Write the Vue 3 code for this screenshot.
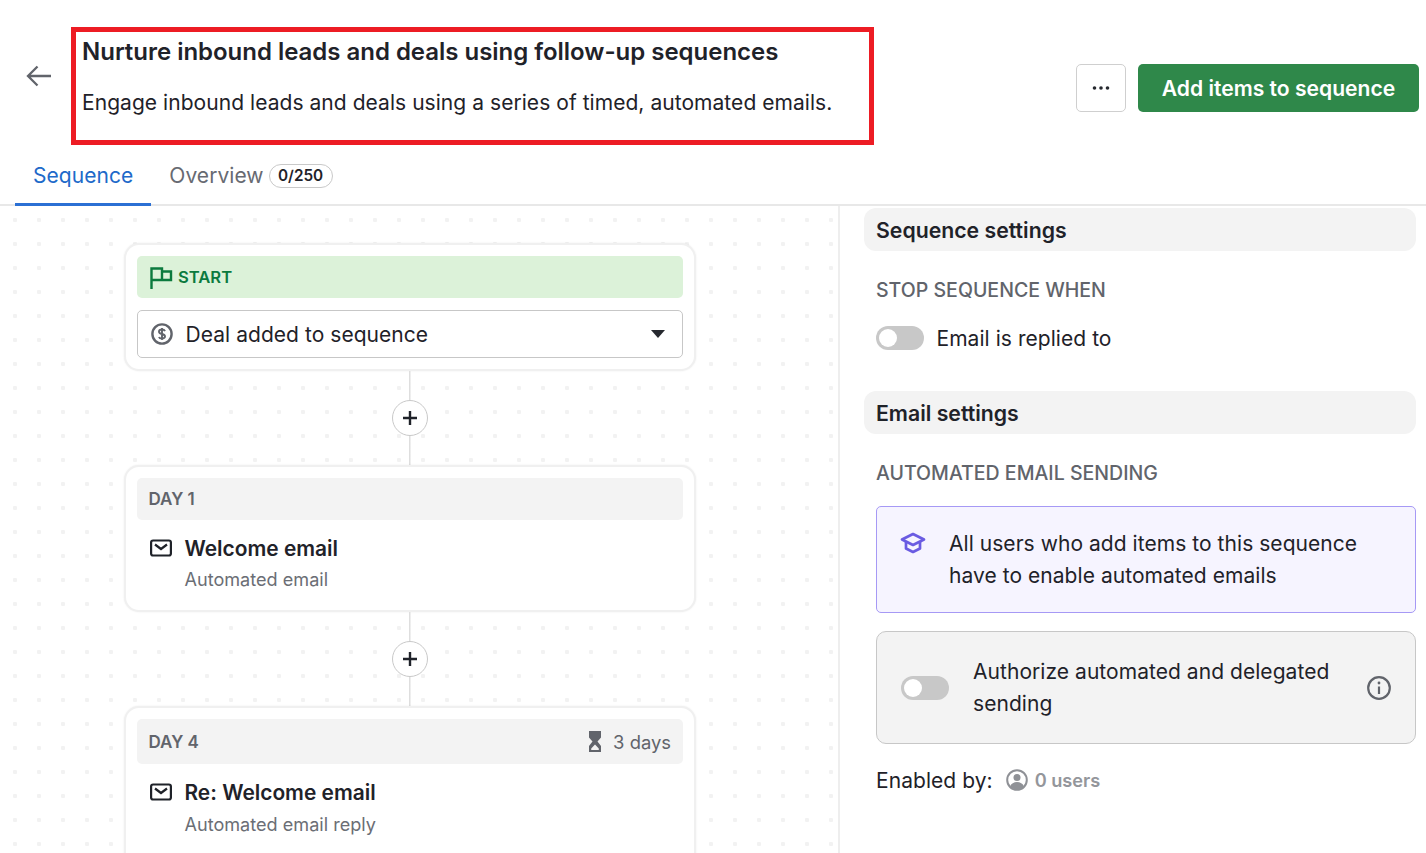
<template>
  <div class="page">
    <header class="top">
      <button class="back" aria-label="Back">
        <svg width="26" height="24" viewBox="0 0 26 24" fill="none" stroke="#61646b" stroke-width="2.300">
          <path d="M25 12H2.500M11.500 2.500 2 12l9.500 9.500" />
        </svg>
      </button>
      <div class="title-box">
        <h1>Nurture inbound leads and deals using follow-up sequences</h1>
        <p>Engage inbound leads and deals using a series of timed, automated emails.</p>
      </div>
      <div class="actions">
        <button class="more" aria-label="More">
          <svg width="18" height="4" viewBox="0 0 18 4" fill="#26292f">
            <circle cx="2.500" cy="2" r="1.800" />
            <circle cx="9" cy="2" r="1.800" />
            <circle cx="15.500" cy="2" r="1.800" />
          </svg>
        </button>
        <button class="add">Add items to sequence</button>
      </div>
    </header>

    <nav class="tabs">
      <a class="tab active">Sequence</a>
      <a class="tab">Overview <span class="count">0/250</span></a>
    </nav>

    <main class="body">
      <section class="canvas">
        <div class="card">
          <div class="start-bar">
            <svg width="24" height="23" viewBox="0 0 24 23" fill="none" stroke="#0b7a3e" stroke-width="2.400">
              <path d="M2.500 23V2.500h10.500v11.500H2.500M13 5.500h9V14h-9" />
            </svg>
            START
          </div>
          <div class="select">
            <svg width="22" height="22" viewBox="0 0 22 22" fill="none" stroke="#61646b" stroke-width="2.400">
              <circle cx="11" cy="11" r="9.600" />
              <path d="M14 8.200c-.4-1-1.500-1.700-3-1.700-1.700 0-3 .8-3 2.200 0 3 6 1.600 6 4.600 0 1.400-1.300 2.200-3 2.200-1.500 0-2.700-.6-3-1.600M11 5v12" stroke-width="1.900" />
            </svg>
            <span>Deal added to sequence</span>
            <i class="caret"></i>
          </div>
        </div>

        <div class="link">
          <button class="plus" aria-label="Add step">
            <svg width="16" height="16" viewBox="0 0 16 16" stroke="#1f2229" stroke-width="2.400"><path d="M8 1v14M1 8h14" /></svg>
          </button>
        </div>

        <div v-for="(step, i) in steps" :key="step.title" class="step-wrap">
          <div class="card step">
            <div class="day" :class="{ tall: step.wait }">
              <b>{{ step.day }}</b>
              <span v-if="step.wait" class="wait">
                <svg width="12" height="21" viewBox="0 0 12 21">
                  <path d="M0 0h12v6.500L8.500 10.500 12 15v6H0v-6l3.500-4.500L0 6.500z" fill="#61646b" />
                  <path d="M6 13.500 2.200 17.500v1.500h7.600v-1.500z" fill="#f3f3f3" />
                </svg>
                {{ step.wait }}
              </span>
            </div>
            <div class="mail">
              <svg width="22" height="18" viewBox="0 0 22 18" fill="none" stroke="#1f2229" stroke-width="2.200">
                <rect x="1.100" y="1.500" width="19.800" height="15" rx="2" />
                <path d="m5 5.500 6 4.500 6-4.500" />
              </svg>
              <div>
                <div class="mail-title">{{ step.title }}</div>
                <div class="mail-sub">{{ step.sub }}</div>
              </div>
            </div>
          </div>
          <div v-if="i < steps.length - 1" class="link second">
            <button class="plus" aria-label="Add step">
              <svg width="16" height="16" viewBox="0 0 16 16" stroke="#1f2229" stroke-width="2.400"><path d="M8 1v14M1 8h14" /></svg>
            </button>
          </div>
        </div>
      </section>

      <aside class="side">
        <h2 class="bar">Sequence settings</h2>
        <h3 class="caps">STOP SEQUENCE WHEN</h3>
        <div class="row">
          <span class="toggle"></span>
          <span>Email is replied to</span>
        </div>

        <h2 class="bar second-bar">Email settings</h2>
        <h3 class="caps">AUTOMATED EMAIL SENDING</h3>
        <div class="note">
          <svg width="26" height="22" viewBox="0 0 26 22" fill="none" stroke="#6a5be2" stroke-width="2.700" stroke-linejoin="round">
            <path d="M13 2 2 7.500 13 13l11-5.500z" />
            <path d="M6 10v6.500l7 3.500 7-3.500V10" />
          </svg>
          <p>All users who add items to this sequence have to enable automated emails</p>
        </div>
        <div class="auth">
          <span class="toggle"></span>
          <p>Authorize automated and delegated sending</p>
          <svg class="info" width="24" height="24" viewBox="0 0 24 24" fill="none" stroke="#61646b" stroke-width="2.200">
            <circle cx="12" cy="12" r="10.800" />
            <path d="M12 10.500V18" />
            <circle cx="12" cy="7" r="1.400" fill="#61646b" stroke="none" />
          </svg>
        </div>
        <div class="enabled">
          <span>Enabled by:</span>
          <svg width="22" height="22" viewBox="0 0 22 22">
            <circle cx="11" cy="11" r="9.800" fill="none" stroke="#8f9196" stroke-width="2" />
            <circle cx="11" cy="8.500" r="3.500" fill="#8f9196" />
            <path d="M4 17.500c1-3 4-4.500 7-4.500s6 1.500 7 4.500c-1.800 2-4.300 3.200-7 3.200s-5.200-1.200-7-3.200z" fill="#8f9196" />
          </svg>
          <b>0 users</b>
        </div>
      </aside>
    </main>
  </div>
</template>

<script setup>
const steps = [
  { day: "DAY 1", title: "Welcome email", sub: "Automated email" },
  { day: "DAY 4", wait: "3 days", title: "Re: Welcome email", sub: "Automated email reply" },
];
</script>

<style>
html,
body {
  margin: 0;
  background: #fff;
  overflow: hidden;
}
</style>

<style scoped>
.page {
  width: 1426px;
  height: 853px;
  overflow: hidden;
  font-family: Inter, "Liberation Sans", sans-serif;
  color: #1f2229;
  font-size: 21px;
  letter-spacing: 0.05px;
}
button {
  font-family: inherit;
  cursor: pointer;
}
.top {
  display: flex;
  align-items: flex-start;
  height: 145px;
  padding: 27px 7px 0 26px;
  box-sizing: border-box;
}
.back {
  border: none;
  background: none;
  padding: 0;
  width: 26px;
  height: 24px;
  margin: 37px 19px 0 0;
}
.title-box {
  width: 803px;
  height: 118px;
  box-sizing: border-box;
  border: 5px solid #ed1c24;
  padding: 5px 6px;
}
.title-box h1 {
  margin: 0;
  font-size: 24px;
  line-height: 30px;
  font-weight: 600;
  letter-spacing: -0.02px;
}
.title-box p {
  margin: 21px 0 0;
  line-height: 30px;
}
.actions {
  margin: 37px 0 0 auto;
  display: flex;
  gap: 12px;
}
.more {
  width: 50px;
  height: 48px;
  background: #fff;
  border: 1px solid #cfcfcf;
  border-radius: 5px;
  display: flex;
  align-items: center;
  justify-content: center;
  padding: 0;
}
.add {
  width: 281px;
  height: 48px;
  border: none;
  border-radius: 5px;
  background: #2f884a;
  color: #fff;
  font-size: 21.100px;
  font-weight: 600;
  letter-spacing: 0;
  padding: 0;
}
.tabs {
  display: flex;
  height: 61px;
  padding-left: 15px;
  box-sizing: border-box;
  border-bottom: 2px solid #e8e8e8;
}
.tab {
  height: 61px;
  box-sizing: border-box;
  padding: 15.500px 18px 0;
  line-height: 30px;
  color: #676a72;
}
.tab.active {
  color: #2069c9;
  border-bottom: 3px solid #2b70d4;
}
.count {
  display: inline-block;
  height: 24px;
  line-height: 21px;
  box-sizing: border-box;
  padding: 0 8.500px;
  margin-left: -1px;
  border: 1.500px solid #c9c9c9;
  border-radius: 12px;
  color: #1f2229;
  font-size: 15.300px;
  font-weight: 600;
  letter-spacing: 0;
  vertical-align: 2px;
}
.body {
  display: flex;
  height: 647px;
}
.canvas {
  width: 840px;
  box-sizing: border-box;
  border-right: 2px solid #eeeeee;
  padding: 37px 0 0 124px;
  background-image: radial-gradient(circle, #f2f2f2 2px, transparent 2.500px);
  background-size: 24px 24px;
  background-position: 3px 2px;
}
.card {
  width: 572px;
  box-sizing: border-box;
  background: #fff;
  border: 2px solid #f0f0f0;
  border-radius: 15px;
  padding: 11px;
  box-shadow: 0 0 2px rgba(0, 0, 0, 0.08);
}
.start-bar {
  height: 42px;
  border-radius: 5px;
  background: #dcf2d9;
  color: #0b7a3e;
  font-size: 16.600px;
  font-weight: 600;
  letter-spacing: 0;
  display: flex;
  align-items: center;
  gap: 5px;
  padding-left: 12px;
}
.select {
  height: 48px;
  margin-top: 12px;
  box-sizing: border-box;
  border: 1px solid #c7c7c7;
  border-radius: 5px;
  display: flex;
  align-items: center;
  gap: 12.500px;
  padding: 0 17px 0 13px;
}
.caret {
  margin-left: auto;
  border-left: 7.500px solid transparent;
  border-right: 7.500px solid transparent;
  border-top: 8px solid #26292f;
}
.link {
  width: 572px;
  height: 94px;
  display: flex;
  align-items: center;
  justify-content: center;
  background: linear-gradient(#dedede, #dedede) center / 1.500px 100% no-repeat;
}
.plus {
  width: 36px;
  height: 36px;
  padding: 0;
  border: 1px solid #c9c9c9;
  border-radius: 50%;
  background: #fff;
  display: flex;
  align-items: center;
  justify-content: center;
}
.step {
  height: 147px;
}
.step-wrap:last-child .step {
  height: 170px;
}
.day {
  height: 42px;
  border-radius: 5px;
  background: #f3f3f3;
  display: flex;
  align-items: center;
  justify-content: space-between;
  padding: 0 12px 0 11.500px;
  color: #61646b;
  font-size: 17px;
  letter-spacing: 0;
}
.day.tall {
  height: 45px;
}
.day b {
  font-weight: 600;
}
.wait {
  display: flex;
  align-items: center;
  gap: 12.500px;
  font-size: 18.400px;
}
.mail {
  display: flex;
  gap: 12.500px;
  padding: 13px 0 0 13px;
}
.mail svg {
  margin-top: 6px;
}
.mail-title {
  font-size: 20.900px;
  font-weight: 600;
  letter-spacing: 0;
  line-height: 32px;
}
.mail-sub {
  font-size: 18.100px;
  letter-spacing: 0;
  line-height: 28px;
  color: #6b6e75;
}
.day.tall + .mail .mail-sub {
  margin-top: 1px;
}
.side {
  width: 552px;
  margin-left: 24px;
}
.bar {
  margin: 2px 0 0;
  height: 43px;
  line-height: 44px;
  padding-left: 12px;
  border-radius: 12px;
  background: #f3f3f3;
  font-size: 21.250px;
  font-weight: 600;
  letter-spacing: 0;
}
.second-bar {
  margin-top: 38px;
}
.caps {
  margin: 24px 0 0 12px;
  line-height: 30px;
  font-size: 19.550px;
  font-weight: 500;
  letter-spacing: 0;
  color: #61646b;
}
.row {
  display: flex;
  align-items: center;
  gap: 12.500px;
  margin: 18px 0 0 12px;
  height: 30px;
}
.toggle {
  flex: none;
  display: block;
  width: 48px;
  height: 24px;
  border-radius: 12px;
  background: #c8c8c8;
  position: relative;
}
.toggle::after {
  content: "";
  position: absolute;
  left: 3px;
  top: 3px;
  width: 18px;
  height: 18px;
  border-radius: 50%;
  background: #fff;
}
.note {
  margin: 18px 0 0 12px;
  width: 540px;
  height: 107px;
  box-sizing: border-box;
  border: 1px solid #a699f5;
  border-radius: 5px;
  background: #f6f4ff;
  display: flex;
  padding: 21px 40px 0 23px;
  gap: 23px;
}
.note svg {
  flex: none;
  margin-top: 4px;
}
.note p,
.auth p {
  margin: 0;
  line-height: 32px;
}
.auth {
  margin: 18px 0 0 12px;
  width: 540px;
  height: 113px;
  box-sizing: border-box;
  border: 1px solid #c7c7c7;
  border-radius: 10px;
  background: #f3f3f3;
  display: flex;
  align-items: center;
  padding: 0 24px;
  gap: 24px;
}
.auth .info {
  flex: none;
  margin-left: auto;
}
.enabled {
  display: flex;
  align-items: center;
  gap: 13px;
  margin: 21px 0 0 12px;
  height: 30px;
}
.enabled b {
  margin-left: -6px;
  font-size: 18.200px;
  font-weight: 600;
  letter-spacing: 0;
  color: #94969b;
}
</style>
